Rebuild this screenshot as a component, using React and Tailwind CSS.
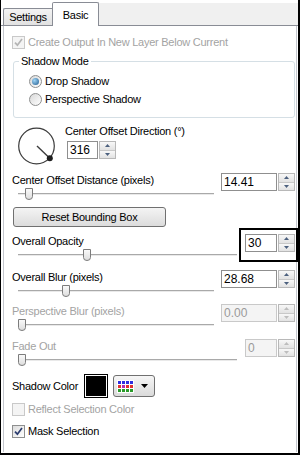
import React from "react";

function Check({ checked, disabled }) {
  return (
    <span
      className={`flex h-[13px] w-[13px] shrink-0 items-center justify-center border ${
        disabled ? "border-[#c9c9c9] bg-[#f4f4f4]" : "border-[#8e8f8f] bg-gradient-to-br from-[#dcdcdc] to-white"
      }`}
    >
      {checked && (
        <svg width="9" height="9" viewBox="0 0 9 9">
          <path d="M1 4.6 L3.4 7.2 L8 1" fill="none" stroke={disabled ? "#b4b4b4" : "#2b3c6e"} strokeWidth="1.7" />
        </svg>
      )}
    </span>
  );
}

function Radio({ checked }) {
  return (
    <span className="flex h-[13px] w-[13px] shrink-0 items-center justify-center rounded-full border border-[#8e8f8f] bg-gradient-to-br from-[#d8d8d8] to-white">
      {checked && (
        <span className="h-[7px] w-[7px] rounded-full bg-[radial-gradient(circle_at_35%_35%,#9fd4f5,#1f5b8f)]" />
      )}
    </span>
  );
}

function Arrow({ up, disabled }) {
  return (
    <svg width="5" height="3" viewBox="0 0 5 3">
      <path d={up ? "M0 3 L2.5 0 L5 3 Z" : "M0 0 L2.5 3 L5 0 Z"} fill={disabled ? "#bdbdbd" : "#4c607e"} />
    </svg>
  );
}

function Spin({ value, w, disabled }) {
  return (
    <div className="flex h-[18px]">
      <div
        className={`flex items-center border pl-[2px] text-[12px] tracking-normal ${w} ${
          disabled ? "border-[#c9c9c9] bg-[#f4f4f4] text-[#9a9a9a]" : "border-[#8f8f8f] bg-white text-black"
        }`}
      >
        {value}
      </div>
      <div className="ml-[1px] flex w-[17px] flex-col border border-[#b8b8b8]">
        <div className="flex flex-1 items-center justify-center border-b border-[#c8c8c8] bg-gradient-to-b from-[#f8f8f8] to-[#e2e2e2]">
          <Arrow up disabled={disabled} />
        </div>
        <div className="flex flex-1 items-center justify-center bg-gradient-to-b from-[#f8f8f8] to-[#e2e2e2]">
          <Arrow disabled={disabled} />
        </div>
      </div>
    </div>
  );
}

function Slider({ w, pos }) {
  return (
    <div className={`relative ml-[6px] h-[14px] ${w}`}>
      <div className="absolute left-0 right-0 top-[6px] h-[2px] border-t border-[#a9a9a9] bg-[#e9e9e9]" />
      <svg className="absolute top-[1px]" style={{ left: pos }} width="8" height="12" viewBox="0 0 8 12">
        <defs>
          <linearGradient id="th" x1="0" x2="0" y1="0" y2="1">
            <stop offset="0" stopColor="#fbfbfb" />
            <stop offset="1" stopColor="#dcdcdc" />
          </linearGradient>
        </defs>
        <path d="M0.5 0.5 H7.5 V8.5 Q7.5 11.5 4 11.5 Q0.5 11.5 0.5 8.5 Z" fill="url(#th)" stroke="#7c7c7c" />
      </svg>
    </div>
  );
}

function SliderRow({ label, value, pos, long, disabled, highlight, mt }) {
  return (
    <div className={`flex items-start ${mt}`}>
      <div className={long ? "w-[225px]" : "w-[202px]"}>
        <div className={`h-[14px] whitespace-nowrap leading-[14px] ${disabled ? "text-[#a3a3a3]" : ""}`}>{label}</div>
        <Slider w={long ? "w-[219px]" : "w-[196px]"} pos={pos} />
      </div>
      <div className="relative ml-auto">
        <Spin value={value} w={long ? "w-[32px]" : "w-[56px]"} disabled={disabled} />
        {highlight && <div className="absolute -bottom-[10px] -left-[6px] -right-[3px] -top-[6px] border-2 border-black" />}
      </div>
    </div>
  );
}

export default function App() {
  return (
    <div className="flex h-[455px] w-[300px] flex-col border-b-2 border-l border-r-2 border-black bg-white font-[family-name:Liberation_Sans,Arial,sans-serif] text-[11px] tracking-[-0.25px] text-black">
      <div className="mt-[2px] flex h-[24px] items-end">
        <div className="h-[1px] w-[2px] self-end bg-[#898c95]" />
        <div className="flex h-[18px] w-[49px] items-center justify-center rounded-tl-[2px] border-b border-l border-t border-[#898c95] bg-gradient-to-b from-[#f3f3f3] to-[#e1e1e1]">
          Settings
        </div>
        <div className="flex h-[24px] w-[47px] items-start justify-center rounded-t-[2px] border-l border-r border-t border-[#898c95] bg-white pt-[4px]">
          Basic
        </div>
        <div className="h-[23px] flex-1 border-b border-[#898c95] bg-[#f0f0f0]" />
      </div>

      <div className="mb-[1px] ml-[2px] mr-[1px] flex flex-1 flex-col border-l border-r border-[#c4c7ce] pl-[8px] pr-[1px]">
        <div className="mt-[9px] flex h-[14px] items-center whitespace-nowrap text-[#a3a3a3]">
          <Check checked disabled />
          <span className="ml-[3px]">Create Output In New Layer Below Current</span>
        </div>

        <div className="ml-[1px] mt-[12px] h-[57px] rounded-[3px] border border-[#d5dfe5]">
          <div className="-mt-[8px] ml-[5px] h-[14px] w-fit bg-white px-[2px] leading-[14px]">Shadow Mode</div>
          <div className="ml-[15px] mt-[7px] flex h-[13px] items-center">
            <Radio checked />
            <span className="ml-[3px]">Drop Shadow</span>
          </div>
          <div className="ml-[15px] mt-[5px] flex h-[13px] items-center">
            <Radio />
            <span className="ml-[3px]">Perspective Shadow</span>
          </div>
        </div>

        <div className="mt-[6px] flex items-start">
          <svg className="ml-[5px] mt-[2px]" width="40" height="40" viewBox="0 0 40 40">
            <circle cx="19.5" cy="20" r="17.8" fill="none" stroke="#3c3c3c" strokeWidth="1.2" />
            <line x1="20" y1="20" x2="32.5" y2="32" stroke="#3c3c3c" strokeWidth="1.4" />
            <circle cx="32.8" cy="32.2" r="3" fill="#1e1e1e" />
          </svg>
          <div className="ml-[8px] flex flex-col">
            <div className="h-[14px] leading-[14px]">Center Offset Direction (°)</div>
            <div className="ml-[2px] mt-[3px]">
              <Spin value="316" w="w-[31px]" />
            </div>
          </div>
        </div>

        <SliderRow mt="mt-[7px]" label="Center Offset Distance (pixels)" value="14.41" pos={7} />

        <button className="ml-[1px] mt-[6px] h-[20px] w-[153px] rounded-[3px] border border-[#707070] bg-gradient-to-b from-[#f4f4f4] to-[#dcdcdc] text-[11px] tracking-[-0.25px]">
          Reset Bounding Box
        </button>

        <SliderRow mt="mt-[7px]" label="Overall Opacity" value="30" pos={65} long highlight />
        <SliderRow mt="mt-[8px]" label="Overall Blur (pixels)" value="28.68" pos={44} />
        <SliderRow mt="mt-[6px]" label="Perspective Blur (pixels)" value="0.00" pos={0} disabled />
        <SliderRow mt="mt-[7px]" label="Fade Out" value="0" pos={0} long disabled />

        <div className="mt-[7px] flex h-[24px] items-center">
          <span className="w-[72px]">Shadow Color</span>
          <div className="h-[24px] w-[24px] border border-black bg-white p-[1px]">
            <div className="h-full w-full bg-black" />
          </div>
          <div className="ml-[5px] flex h-[22px] w-[42px] items-center rounded-[3px] border border-[#707070] bg-gradient-to-b from-[#f6f6f6] to-[#dadada] pl-[3px]">
            <svg width="17" height="13" viewBox="0 0 17 13">
              <rect x="0" y="0" width="17" height="13" fill="#ffffff" />
              {[0, 1, 2, 3].map((c) => (
                <g key={c}>
                  <rect x={1 + c * 4} y="1" width="3" height="3" fill="#2f2fe0" />
                  <rect x={1 + c * 4} y="5" width="3" height="3" fill={c === 1 ? "#b02fb0" : "#e03030"} />
                  <rect x={1 + c * 4} y="9" width="3" height="3" fill="#2a9a2a" />
                </g>
              ))}
            </svg>
            <svg className="ml-[7px]" width="7" height="4" viewBox="0 0 7 4">
              <path d="M0 0 L3.5 4 L7 0 Z" fill="#000" />
            </svg>
          </div>
        </div>

        <div className="mt-[4px] flex h-[14px] items-center text-[#a3a3a3]">
          <Check disabled />
          <span className="ml-[3px]">Reflect Selection Color</span>
        </div>

        <div className="mt-[8px] flex h-[14px] items-center">
          <Check checked />
          <span className="ml-[3px]">Mask Selection</span>
        </div>
      </div>
    </div>
  );
}
